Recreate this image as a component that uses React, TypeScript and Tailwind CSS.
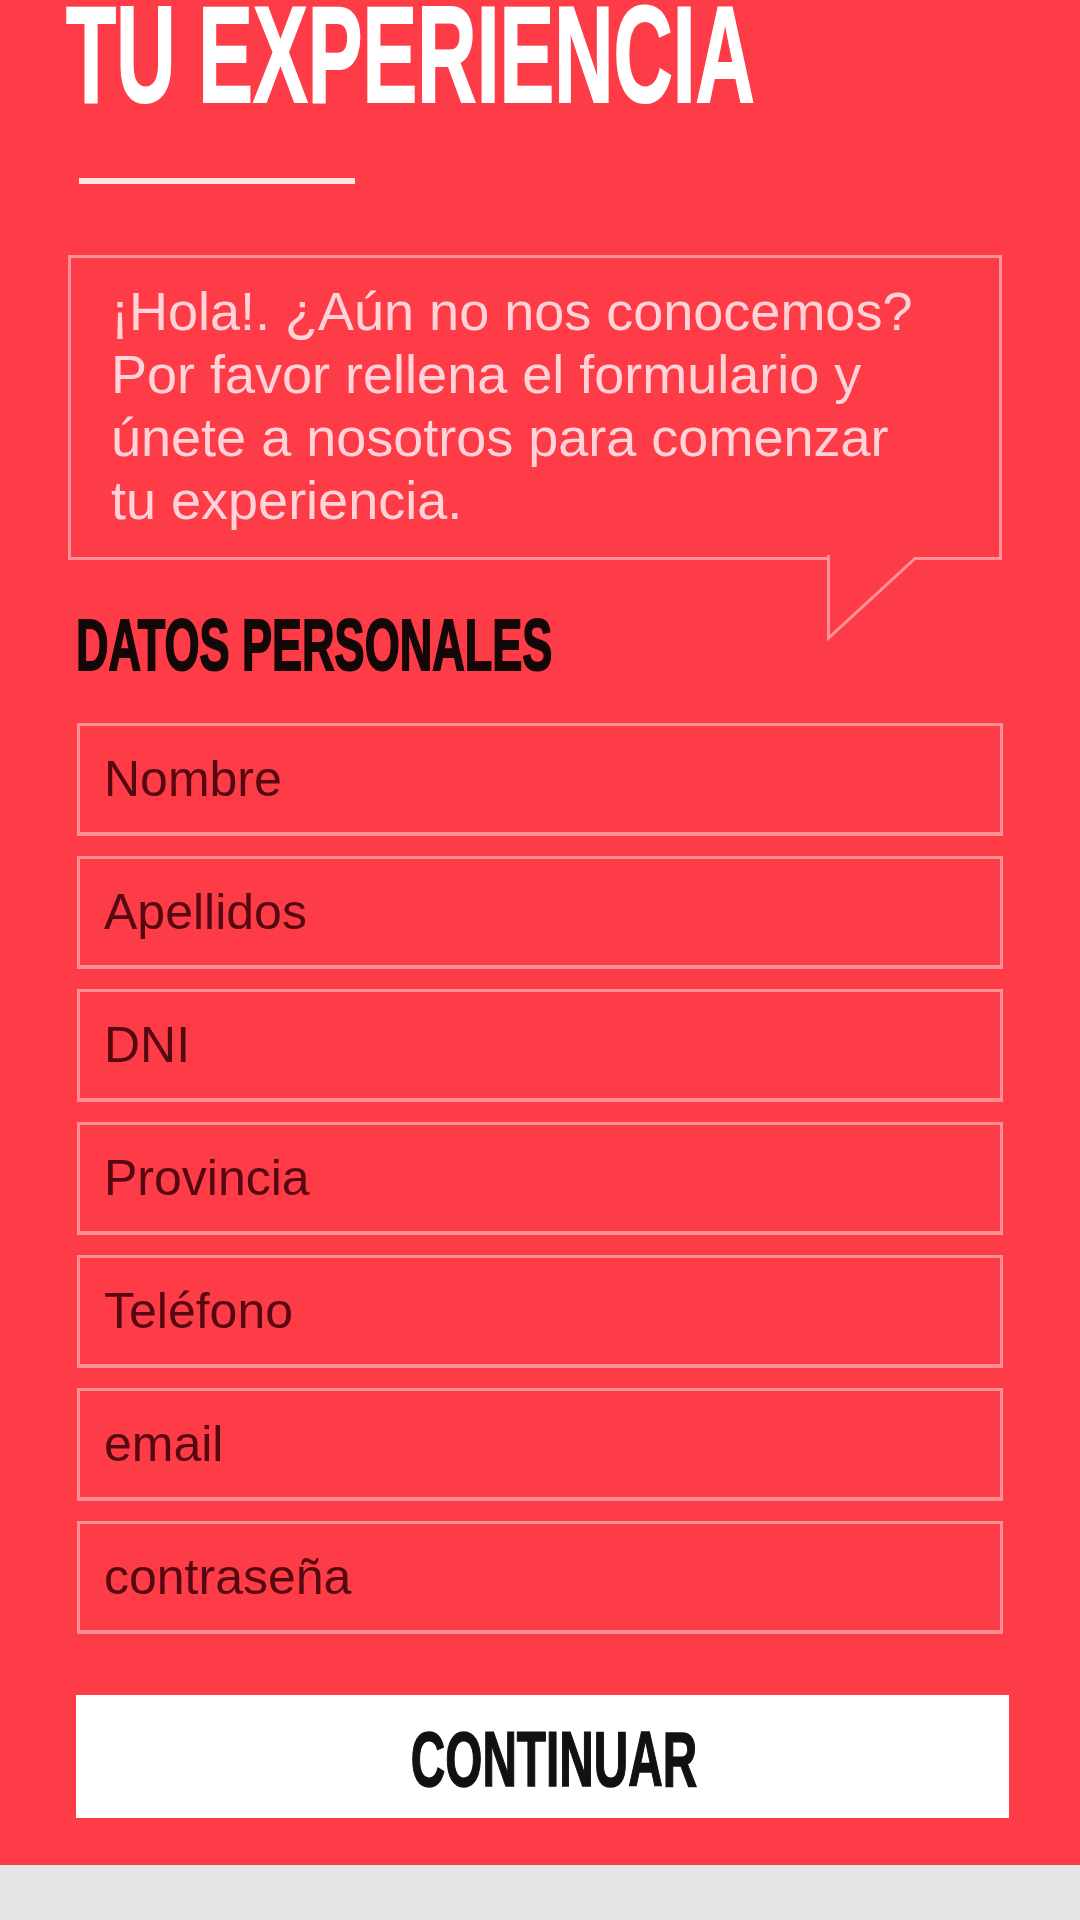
import React from "react";

const fields = ["Nombre", "Apellidos", "DNI", "Provincia", "Teléfono", "email", "contraseña"];

export default function App() {
  return (
    <div className="w-[1080px] h-[1920px] bg-[#e5e7e6] overflow-hidden font-['Liberation_Sans',Arial,sans-serif]">
      <div className="h-[1865px] bg-[#fe3c47] flex flex-col">
        <div className="h-[108px] pl-[66px]">
          <h1 className="w-max origin-left scale-x-[0.595] whitespace-nowrap text-[138px] font-bold leading-[108px] text-white [-webkit-text-stroke:2px_#ffffff]">
            TU EXPERIENCIA
          </h1>
        </div>
        <div className="ml-[79px] mt-[70px] h-[6px] w-[276px] bg-[#ffe3e3]" />

        <div className="relative ml-[68px] mt-[71px] h-[305px] w-[934px] border-[3px] border-[#ff9399] pl-[40px] pt-[22px]">
          <p className="whitespace-nowrap text-[54px] leading-[63px] text-[#ffd3d7]">
            ¡Hola!. ¿Aún no nos conocemos?
            <br />
            Por favor rellena el formulario y
            <br />
            únete a nosotros para comenzar
            <br />
            tu experiencia.
          </p>
          <svg
            className="absolute left-[750px] top-[296px]"
            width="100"
            height="92"
            viewBox="0 0 100 92"
          >
            <rect x="9" y="0" width="84" height="9" fill="#fe3c47" />
            <polyline
              points="7.5,1 7.5,84 94,4.5"
              fill="none"
              stroke="#ff9399"
              strokeWidth="3"
              strokeLinejoin="miter"
            />
          </svg>
        </div>

        <div className="mt-[48px] h-[73px] pl-[76px]">
          <h2 className="w-max origin-left scale-x-[0.617] whitespace-nowrap text-[73px] font-bold leading-[73px] text-[#140707] [-webkit-text-stroke:2px_#140707]">
            DATOS PERSONALES
          </h2>
        </div>

        <div className="ml-[77px] mt-[42px] flex w-[926px] flex-col gap-[20px]">
          {fields.map((f) => (
            <input
              key={f}
              type={f === "contraseña" ? "password" : "text"}
              placeholder={f}
              className="h-[113px] w-full border-[3px] border-b-[4px] border-[#ff8e95] bg-transparent px-[24px] text-[50px] text-[#560811] outline-none placeholder:text-[#560811]"
            />
          ))}
        </div>

        <button className="ml-[76px] mt-[61px] flex h-[123px] w-[933px] items-center justify-center bg-white pl-[22px] pt-[6px]">
          <span className="w-max origin-center scale-x-[0.62] whitespace-nowrap text-[77px] font-bold leading-none text-[#111111] [-webkit-text-stroke:1.5px_#111111]">
            CONTINUAR
          </span>
        </button>
      </div>
    </div>
  );
}
